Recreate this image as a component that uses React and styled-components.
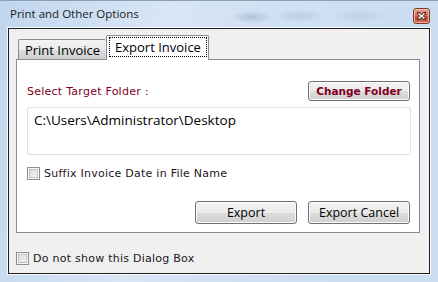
import React from "react";
import styled, { createGlobalStyle } from "styled-components";

const Global = createGlobalStyle`
  html, body { margin: 0; padding: 0; background: #ffffff; }
  * { box-sizing: border-box; }
`;

const UI = `"Open Sans", "Noto Sans", sans-serif`;
const TAHOMA = `"DejaVu Sans", "Verdana", sans-serif`;

const Window = styled.div`
  width: 438px;
  height: 282px;
  display: flex;
  flex-direction: column;
  padding: 0 8px 8px 8px;
  background:
    radial-gradient(ellipse 22px 7px at 252px 16px, rgba(150,170,195,0.55), transparent),
    radial-gradient(ellipse 26px 6px at 300px 15px, rgba(160,180,205,0.45), transparent),
    radial-gradient(ellipse 30px 6px at 360px 15px, rgba(160,180,205,0.35), transparent),
    linear-gradient(100deg, #c1d6ee 0%, #d8e6f5 35%, #cfe0f2 60%, #c9dcf0 100%);
  border-top: 1px solid #8aa0b8;
`;

const TitleBar = styled.div`
  height: 27px;
  display: flex;
  align-items: center;
  justify-content: space-between;
  padding-left: 2px;
`;

const Title = styled.span`
  font-family: ${UI};
  font-size: 11.5px;
  color: #1b1b1b;
  margin-top: -2px;
`;

const CloseButton = styled.div`
  width: 17px;
  height: 16px;
  margin-top: 2px;
  border: 1px solid #7c3a2d;
  border-radius: 3px;
  background: linear-gradient(#e8a493 0%, #d8725c 45%, #c24a2f 55%, #d27055 100%);
  box-shadow: inset 0 0 0 1px rgba(255, 220, 210, 0.6);
  display: flex;
  align-items: center;
  justify-content: center;
`;

const Client = styled.div`
  flex: 1;
  display: flex;
  flex-direction: column;
  background: #f0f0f0;
  border: 1px solid #1f1f1f;
  box-shadow: 0 0 0 1px rgba(255, 255, 255, 0.85);
  padding: 6px 9px 0 7px;
`;

const TabStrip = styled.div`
  height: 24px;
  display: flex;
  align-items: flex-end;
  padding-left: 2px;
  position: relative;
  z-index: 1;
`;

const Tab = styled.div`
  font-family: ${UI};
  font-size: 13px;
  color: #000;
  border: 1px solid #898c95;
  border-bottom: none;
  border-radius: 2px 2px 0 0;
  display: flex;
  align-items: center;
  ${(p) =>
    p.$active
      ? `
    height: 25px;
    margin-bottom: -1px;
    width: 103px;
    background: #ffffff;
    padding: 1px 1px 3px 2px;
  `
      : `
    height: 20px;
    width: 88px;
    border-right: none;
    background: linear-gradient(#f3f3f3 0%, #ebebeb 50%, #dddddd 51%, #cfcfcf 100%);
    justify-content: center;
    padding-top: 1px;
  `}
`;

const FocusLabel = styled.span`
  flex: 1;
  height: 100%;
  border: 1px dotted #000;
  display: flex;
  align-items: center;
  justify-content: center;
  padding-bottom: 1px;
`;

const Panel = styled.div`
  display: flex;
  flex-direction: column;
  background: #ffffff;
  border: 1px solid #898c95;
  padding: 0 9px 8px 10px;
`;

const HeaderRow = styled.div`
  margin-top: 21px;
  height: 20px;
  display: flex;
  align-items: center;
  justify-content: space-between;
`;

const FieldLabel = styled.span`
  font-family: ${TAHOMA};
  font-size: 11px;
  letter-spacing: 0.25px;
  color: #80001c;
  padding-top: 1px;
`;

const Button = styled.button`
  width: ${(p) => p.$w || 102}px;
  height: ${(p) => p.$h || 23}px;
  padding: 0;
  border: 1px solid #707070;
  border-radius: 3px;
  background: linear-gradient(#f2f2f2 0%, #ebebeb 50%, #dddddd 51%, #cfcfcf 100%);
  box-shadow: inset 0 0 0 1px #fbfbfb;
  font-family: ${(p) => (p.$bold ? TAHOMA : UI)};
  font-size: ${(p) => (p.$bold ? "10.5px" : "12.5px")};
  font-weight: ${(p) => (p.$bold ? 700 : 400)};
  color: ${(p) => (p.$bold ? "#80001c" : "#000")};
  display: flex;
  align-items: center;
  justify-content: center;
`;

const PathBox = styled.div`
  margin-top: 6px;
  margin-right: -1px;
  height: 48px;
  border: 1px solid #dde0e6;
  border-radius: 2px;
  padding: 3px 0 0 6px;
  font-family: ${UI};
  font-size: 13.5px;
  color: #000;
`;

const CheckRow = styled.label`
  display: flex;
  align-items: center;
  gap: 4px;
  margin-top: ${(p) => p.$mt || 0}px;
  font-family: ${TAHOMA};
  font-size: 11px;
  letter-spacing: 0.25px;
  color: #1c1424;
`;

const CheckBox = styled.span`
  width: 13px;
  height: 13px;
  border: 1px solid #8e8f8f;
  background: linear-gradient(135deg, #dadada 0%, #f6f6f6 100%);
  box-shadow: inset 0 0 0 1px #f6f6f6, inset 0 0 0 2px #c4c4c4;
  flex: none;
`;

const ButtonRow = styled.div`
  margin-top: 21px;
  display: flex;
  justify-content: flex-end;
  gap: 11px;
`;

export default function App() {
  return (
    <>
      <Global />
      <Window>
        <TitleBar>
          <Title>Print and Other Options</Title>
          <CloseButton>
            <svg width="9" height="8" viewBox="0 0 9 8">
              <path d="M1 1 L8 7 M8 1 L1 7" stroke="#4a2a24" strokeWidth="3" strokeLinecap="square" />
              <path d="M1.5 1.5 L7.5 6.5 M7.5 1.5 L1.5 6.5" stroke="#ffffff" strokeWidth="1.6" />
            </svg>
          </CloseButton>
        </TitleBar>
        <Client>
          <TabStrip>
            <Tab>Print Invoice</Tab>
            <Tab $active>
              <FocusLabel>Export Invoice</FocusLabel>
            </Tab>
          </TabStrip>
          <Panel>
            <HeaderRow>
              <FieldLabel>Select Target Folder :</FieldLabel>
              <Button $bold $w={102} $h={20}>Change Folder</Button>
            </HeaderRow>
            <PathBox>C:\Users\Administrator\Desktop</PathBox>
            <CheckRow $mt={12}>
              <CheckBox />
              Suffix Invoice Date in File Name
            </CheckRow>
            <ButtonRow>
              <Button $w={102}>Export</Button>
              <Button $w={102}>Export Cancel</Button>
            </ButtonRow>
          </Panel>
          <CheckRow $mt={19}>
            <CheckBox />
            Do not show this Dialog Box
          </CheckRow>
        </Client>
      </Window>
    </>
  );
}
